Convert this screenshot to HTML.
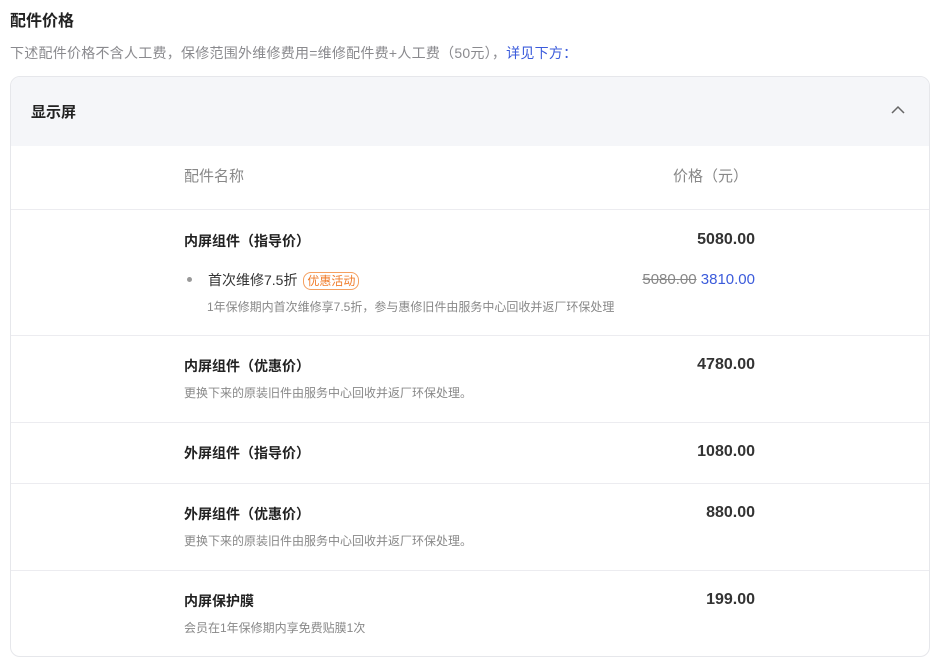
<!DOCTYPE html>
<html><head><meta charset="utf-8"><style>
*{margin:0;padding:0;box-sizing:border-box}
body{width:944px;height:662px;background:#fff;font-family:"Liberation Sans","Noto Sans CJK SC",sans-serif;color:#222;position:relative;overflow:hidden}
.abs{position:absolute}
.t{left:10px;top:7px;font-size:16px;font-weight:bold;color:#222}
.d{left:10px;top:43px;font-size:14px;color:#8a8a8e;letter-spacing:0.25px}
.d span{color:#3b5bdb}
.card{left:10px;top:76px;width:920px;height:581px;border:1px solid #e6e7eb;border-radius:10px;overflow:hidden}
.hd{height:69px;background:#f5f6f9;position:relative}
.hd b{position:absolute;left:20px;top:24px;font-size:15px;color:#222}
.row{position:relative;border-top:1px solid #ececf0}
.n{position:absolute;left:173px;font-size:14px;font-weight:bold;color:#222}
.p{position:absolute;right:174px;font-size:16px;font-weight:bold;color:#333}
.s{position:absolute;left:173px;font-size:12px;color:#888}
</style></head><body>
<div class="abs t">配件价格</div>
<div class="abs d">下述配件价格不含人工费，保修范围外维修费用=维修配件费+人工费（50元），<span>详见下方：</span></div>
<div class="abs card">
<div class="hd"><b>显示屏</b><svg style="position:absolute;right:24px;top:28px" width="14" height="10" viewBox="0 0 14 10"><path d="M1 8 L7 2 L13 8" fill="none" stroke="#666" stroke-width="1.5"/></svg></div>
<div class="row" style="height:63px;border-top:none"><div class="n" style="top:19px;font-weight:normal;color:#888;font-size:15px">配件名称</div><div class="p" style="top:19px;font-weight:normal;color:#888;right:181px;font-size:15px">价格（元）</div></div>
<div class="row" style="height:126px">
<div class="n" style="top:21px">内屏组件（指导价）</div><div class="p" style="top:21px">5080.00</div>
<div class="abs" style="left:176px;top:67px;width:5px;height:5px;border-radius:50%;background:#999"></div>
<div class="abs" style="left:197px;top:60px;font-size:14px;color:#333">首次维修7.5折 <span style="display:inline-block;font-size:12px;color:#f07c2a;border:1px solid #f5a060;border-radius:8px;padding:0 3px;line-height:16px;margin-left:2px">优惠活动</span></div>
<div class="abs" style="right:174px;top:61px;font-size:15px"><s style="color:#888">5080.00</s> <span style="color:#3b5bdb">3810.00</span></div>
<div class="s" style="left:196px;top:88px">1年保修期内首次维修享7.5折，参与惠修旧件由服务中心回收并返厂环保处理</div>
</div>
<div class="row" style="height:87px"><div class="n" style="top:20px">内屏组件（优惠价）</div><div class="p" style="top:20px">4780.00</div><div class="s" style="top:48px">更换下来的原装旧件由服务中心回收并返厂环保处理。</div></div>
<div class="row" style="height:61px"><div class="n" style="top:20px">外屏组件（指导价）</div><div class="p" style="top:20px">1080.00</div></div>
<div class="row" style="height:87px"><div class="n" style="top:20px">外屏组件（优惠价）</div><div class="p" style="top:20px">880.00</div><div class="s" style="top:48px">更换下来的原装旧件由服务中心回收并返厂环保处理。</div></div>
<div class="row" style="height:87px"><div class="n" style="top:20px">内屏保护膜</div><div class="p" style="top:20px">199.00</div><div class="s" style="top:48px">会员在1年保修期内享免费贴膜1次</div></div>
</div>
</body></html>
